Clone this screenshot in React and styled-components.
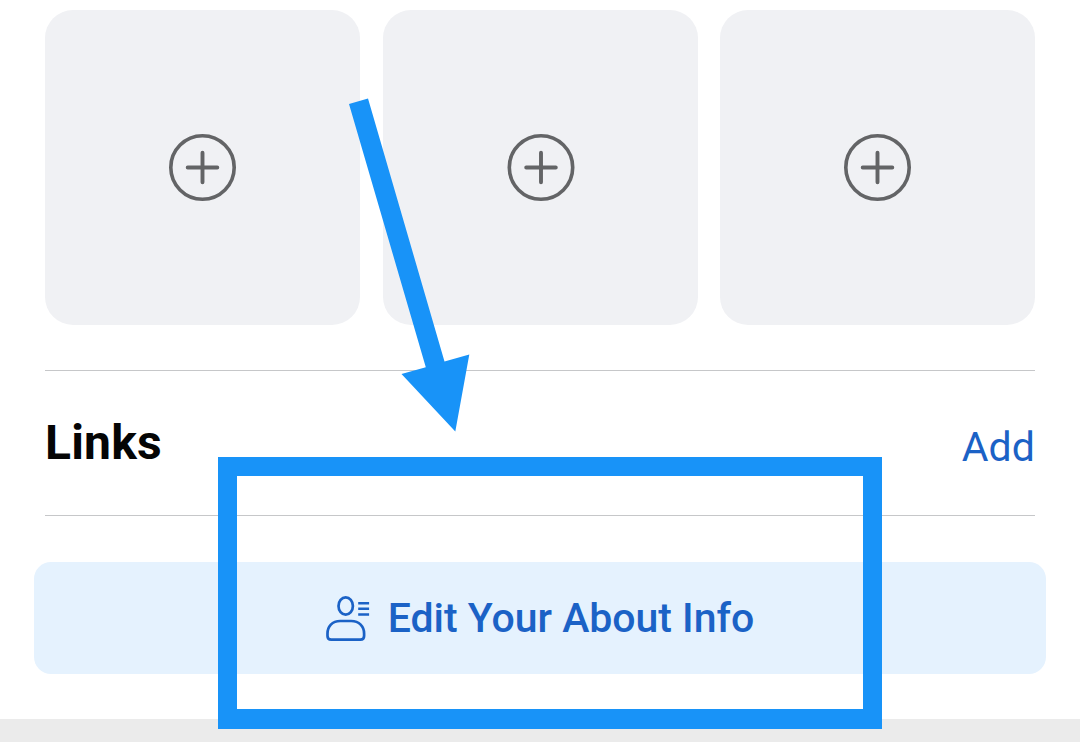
import React from 'react'
import styled, { createGlobalStyle } from 'styled-components'

const GlobalStyle = createGlobalStyle`
  body {
    margin: 0;
    background: #fff;
    font-family: Roboto, sans-serif;
    overflow: hidden;
  }
`;

const Page = styled.div`
  position: relative;
  display: flex;
  flex-direction: column;
  width: 1080px;
  height: 742px;
  overflow: hidden;
`;

const Content = styled.main`
  padding: 10px 45px 0;
`;

const Tiles = styled.div`
  display: grid;
  grid-template-columns: repeat(3, 315px);
  justify-content: space-between;
  height: 315px;
  margin-bottom: 45px;
`;

const Tile = styled.button`
  display: flex;
  align-items: center;
  justify-content: center;
  padding: 0;
  border: 0;
  border-radius: 28px;
  background: #f0f1f4;
  &:nth-child(2) {
    margin: 0 -0.5px 0 0.5px;
  }
  &:nth-child(2) svg {
    width: 68px;
  }
`;

const LinksRow = styled.section`
  display: flex;
  align-items: baseline;
  justify-content: space-between;
  box-sizing: border-box;
  height: 146px;
  padding-top: 44px;
  border-top: 1px solid #c6c7c9;
  border-bottom: 1px solid #c6c7c9;
`;

const Heading = styled('h2')`
  margin: 0;
  color: #050505;
  font-size: 48px;
  font-weight: 700;
  line-height: 56px;
  letter-spacing: 0.2px;
`;

const AddLink = styled('a')`
  position: relative;
  top: 2px;
  color: #1b62c6;
  font-size: 41px;
  line-height: 48px;
  letter-spacing: 0.1px;
`;

const EditButton = styled.button`
  display: flex;
  align-items: center;
  justify-content: center;
  gap: 18px;
  height: 112px;
  margin: 46px 34px 45px;
  padding: 0 2px 0 0;
  border: 0;
  border-radius: 17px;
  background: #e5f2fe;
  color: #1b62c6;
  font-family: inherit;
  font-size: 41px;
  font-weight: 500;
  letter-spacing: -0.03px;
`;

const Footer = styled.div`
  flex: 1;
  background: #ebebeb;
`;

const Frame = styled.div`
  position: absolute;
  left: 218px;
  top: 457px;
  box-sizing: border-box;
  width: 664px;
  height: 272px;
  border: 19px solid #1893f8;
  border-bottom-width: 20px;
`;

const Arrow = styled.svg`
  position: absolute;
  left: 340px;
  top: 90px;
`;

const PlusIcon = () => (
  <svg width="67" height="67" viewBox="0 0 67 67" fill="none" stroke="#636466">
    <circle cx="33.5" cy="33.5" r="31.7" strokeWidth="3.6" />
    <path d="M18.7 33.5H48.3M33.5 18.7V48.3" strokeWidth="3.9" strokeLinecap="round" />
  </svg>
)

const PersonIcon = () => (
  <svg width="46" height="48" viewBox="0 0 46 48" fill="none" stroke="#1b62c6" strokeWidth="2.7">
    <ellipse cx="21.7" cy="12" rx="7.2" ry="8.7" />
    <path d="M16.2 27H27.2C35.2 27 40.1 32.5 40.1 39.5V42Q40.1 45.7 36.4 45.7H7.2Q3.5 45.7 3.5 42V39.5C3.5 32.5 8.2 27 16.2 27Z" />
    <path d="M34.2 9.2H45.1M34.2 14.8H45.1M34.2 20.5H45.1" strokeWidth="2.5" />
  </svg>
)

const App = () => (
  <>
    <GlobalStyle />
    <Page>
      <Content>
        <Tiles>
          {[1, 2, 3].map(n => (
            <Tile key={n} type="button"><PlusIcon /></Tile>
          ))}
        </Tiles>
        <LinksRow>
          <Heading>Links</Heading>
          <AddLink>Add</AddLink>
        </LinksRow>
      </Content>
      <EditButton type="button">
        <PersonIcon />
        <span>Edit Your About Info</span>
      </EditButton>
      <Footer />
      <Frame />
      <Arrow width="140" height="350" viewBox="340 90 140 350">
        <path d="M349 104L368 98.5L444.5 361.5L469.3 354.5L455.3 431.5L401.5 374L425.8 367.2Z" fill="#1893f8" />
      </Arrow>
    </Page>
  </>
)

export default App
